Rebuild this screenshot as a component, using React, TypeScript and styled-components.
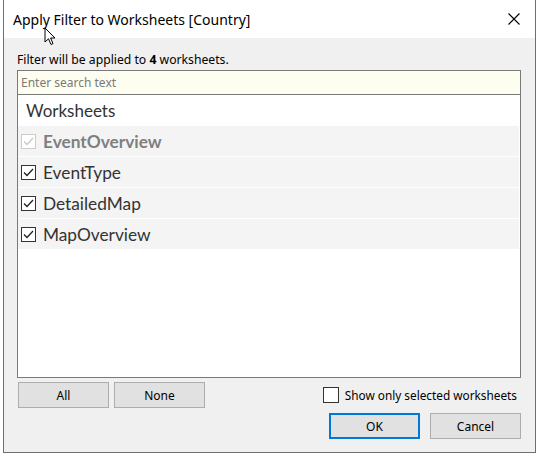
import { FC } from 'react';
import styled, { createGlobalStyle } from 'styled-components';

const GlobalStyle = createGlobalStyle`
  html, body {
    margin: 0;
    padding: 0;
    background: #ffffff;
  }
  body {
    font-family: 'Noto Sans', 'Liberation Sans', sans-serif;
  }
`;

const Page = styled('div')`
  position: relative;
  width: 539px;
  height: 454px;
  overflow: hidden;
  background: #ffffff;
`;

const Window = styled('div')`
  margin-left: 3px;
  width: 531px;
  height: 452px;
  border: 1px solid #6f6f6f;
  border-top: none;
  background: #f0f0f0;
  display: flex;
  flex-direction: column;
`;

const TitleBar = styled('div')`
  height: 38px;
  background: #ffffff;
  display: flex;
  align-items: center;
  justify-content: space-between;
  padding: 0 15px 0 9px;
`;

const Title = styled('span')`
  font-family: 'Noto Sans', sans-serif;
  font-size: 14px;
  color: #000000;
  margin-top: 1px;
`;

const CloseButton = styled('div')`
  width: 12px;
  height: 12px;
  display: flex;
`;

const Body = styled('div')`
  flex: 1;
  display: flex;
  flex-direction: column;
  padding: 13px 14px 0 13px;
`;

const InfoText = styled('div')`
  height: 19px;
  font-size: 12.2px;
  line-height: 18px;
  color: #000000;

  b {
    font-weight: 700;
  }
`;

const SearchBox = styled('div')`
  height: 23px;
  border: 1px solid #7a7a7a;
  background: #fefef0;
  display: flex;
  align-items: center;
  padding-left: 3px;
  font-size: 12px;
  color: #7a7a7a;
`;

const List = styled('div')`
  height: 282px;
  border: 1px solid #7a7a7a;
  border-top: none;
  background: #ffffff;
  display: flex;
  flex-direction: column;
  padding-right: 1px;
`;

const ListHeader = styled('div')`
  height: 31px;
  display: flex;
  align-items: center;
  padding-left: 8px;
  font-family: 'Lato', sans-serif;
  font-size: 17px;
  color: #333333;
`;

const Row = styled('div')`
  height: 30px;
  margin-bottom: 1px;
  background: #f4f4f4;
  display: flex;
  align-items: center;
  padding-left: 3px;
  gap: 7px;
`;

const ItemLabel = styled('span')<{ $disabled?: boolean }>`
  font-family: 'Lato', sans-serif;
  font-size: 17.3px;
  font-weight: ${(p) => (p.$disabled ? 700 : 400)};
  color: ${(p) => (p.$disabled ? '#7f7f7f' : '#333333')};
`;

const Box = styled('div')<{ $disabled?: boolean; $size?: number }>`
  width: ${(p) => p.$size ?? 15}px;
  height: ${(p) => p.$size ?? 15}px;
  box-sizing: border-box;
  border: 1px solid ${(p) => (p.$disabled ? '#cccccc' : '#333333')};
  background: #ffffff;
  display: flex;
  align-items: center;
  justify-content: center;
  flex-shrink: 0;
`;

const Footer = styled('div')`
  display: flex;
  flex-direction: column;
  gap: 5px;
  padding-top: 4px;
`;

const FooterRow = styled('div')`
  display: flex;
  align-items: center;
  justify-content: space-between;
`;

const ButtonGroup = styled('div')<{ $gap: number }>`
  display: flex;
  gap: ${(p) => p.$gap}px;
  margin-left: ${(p) => (p.$gap > 6 ? 'auto' : '1px')};
`;

const Button = styled('div')<{ $primary?: boolean }>`
  width: 91px;
  height: 26px;
  box-sizing: border-box;
  border: ${(p) => (p.$primary ? '2px solid #0078d7' : '1px solid #adadad')};
  background: #e1e1e1;
  display: flex;
  align-items: center;
  justify-content: center;
  font-size: 12px;
  color: #000000;
`;

const ShowOnly = styled('label')`
  display: flex;
  align-items: center;
  gap: 6px;
  font-size: 11.8px;
  color: #000000;
  margin-right: 4px;
`;

const Cursor = styled('svg')`
  position: absolute;
  left: 44px;
  top: 27px;
`;

const Check: FC<{ color: string }> = ({ color }) => (
  <svg width="11" height="9" viewBox="0 0 11 9">
    <path d="M1 4.5 L4 7.5 L10 1" fill="none" stroke={color} strokeWidth="1.3" />
  </svg>
);

const worksheets = [
  { name: 'EventOverview', disabled: true },
  { name: 'EventType' },
  { name: 'DetailedMap' },
  { name: 'MapOverview' },
];

export default function App() {
  return (
    <Page>
      <GlobalStyle />
      <Window>
        <TitleBar>
          <Title>Apply Filter to Worksheets [Country]</Title>
          <CloseButton>
            <svg width="12" height="12" viewBox="0 0 12 12">
              <path d="M0.5 0.5 L11.5 11.5 M11.5 0.5 L0.5 11.5" stroke="#000" strokeWidth="1.1" />
            </svg>
          </CloseButton>
        </TitleBar>
        <Body>
          <InfoText>
            Filter will be applied to <b>4</b> worksheets.
          </InfoText>
          <SearchBox>Enter search text</SearchBox>
          <List>
            <ListHeader>Worksheets</ListHeader>
            {worksheets.map((ws) => (
              <Row key={ws.name}>
                <Box $disabled={ws.disabled}>
                  <Check color={ws.disabled ? '#c8c8c8' : '#222222'} />
                </Box>
                <ItemLabel $disabled={ws.disabled}>{ws.name}</ItemLabel>
              </Row>
            ))}
          </List>
          <Footer>
            <FooterRow>
              <ButtonGroup $gap={5}>
                <Button>All</Button>
                <Button>None</Button>
              </ButtonGroup>
              <ShowOnly>
                <Box $size={16} />
                Show only selected worksheets
              </ShowOnly>
            </FooterRow>
            <FooterRow>
              <ButtonGroup $gap={10}>
                <Button $primary>OK</Button>
                <Button>Cancel</Button>
              </ButtonGroup>
            </FooterRow>
          </Footer>
        </Body>
      </Window>
      <Cursor width="13" height="20" viewBox="0 0 13 20">
        <path
          d="M1 1 L1 15 L4.5 11.8 L7 17.5 L9 16.6 L6.6 11 L11 11 Z"
          fill="#ffffff"
          stroke="#000000"
          strokeWidth="1"
          strokeLinejoin="round"
        />
      </Cursor>
    </Page>
  );
}
